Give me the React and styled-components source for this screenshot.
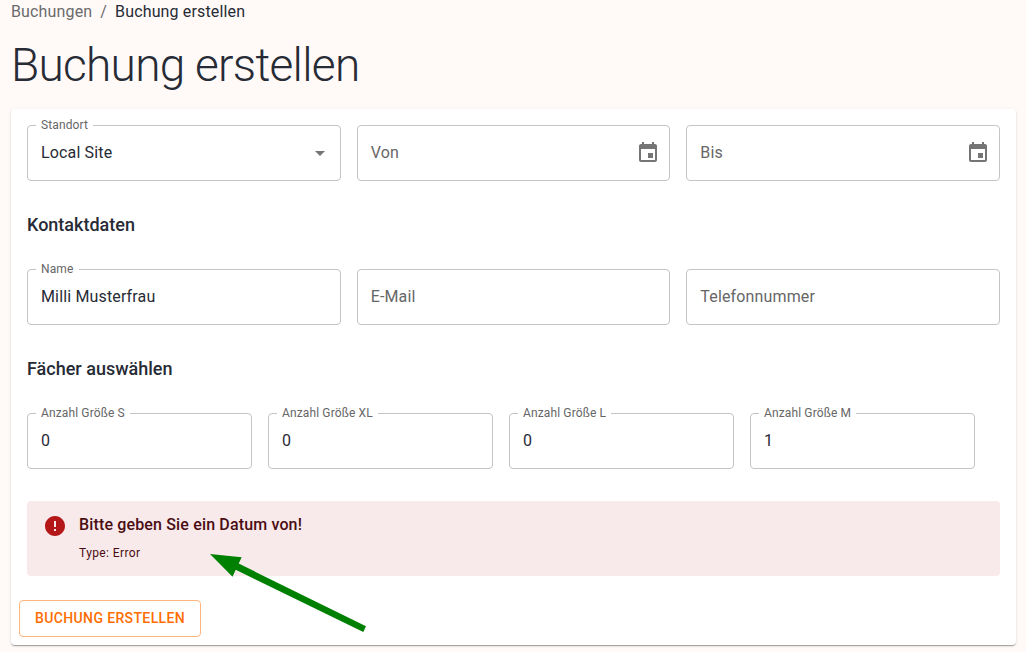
import React from "react";
import styled, { createGlobalStyle } from "styled-components";

const GlobalStyle = createGlobalStyle`
  *, *::before, *::after { box-sizing: border-box; }
  body {
    margin: 0;
    background: #fffaf8;
    color: #272b35;
    font-family: Roboto, "Liberation Sans", sans-serif;
    font-size: 16px;
    line-height: 24px;
    letter-spacing: 0.15px;
  }
`;

const Page = styled.main`
  position: relative;
  height: 652px;
  padding: 0 10px 0 11px;
  overflow: hidden;
`;

const Breadcrumbs = styled.nav`
  display: flex;
  height: 24px;
`;

const Crumb = styled.span`
  color: ${(p) => (p.$current ? "#272b35" : "#6b6a6c")};
`;

const Separator = styled.span`
  margin: 0 8px;
  color: #6b6a6c;
`;

const Title = styled.h1`
  margin: 13px 0 16px;
  font-size: 46px;
  font-weight: 300;
  line-height: 56px;
  letter-spacing: -0.01562em;
`;

const Card = styled.form`
  display: flex;
  flex-direction: column;
  height: 536px;
  padding: 16px 16px 8px;
  border-radius: 4px;
  background: #fff;
  box-shadow: 0 2px 1px -1px rgba(0, 0, 0, 0.2), 0 1px 1px 0 rgba(0, 0, 0, 0.14),
    0 1px 3px 0 rgba(0, 0, 0, 0.12);
`;

const FieldRow = styled.div`
  display: grid;
  grid-template-columns: ${(p) => p.$columns};
  gap: 16px;
`;

const SectionTitle = styled.h2`
  margin: 28px 0;
  font-size: 18px;
  font-weight: 500;
  line-height: 32px;
  letter-spacing: 0;
`;

const FieldBox = styled.div`
  position: relative;
  display: flex;
  align-items: center;
  justify-content: space-between;
  height: 56px;
  padding: 0 ${(p) => (p.$action ? "10px" : "9px")} 0 14px;
`;

const Value = styled.span`
  color: ${(p) => (p.$placeholder ? "#666" : "#272b35")};
`;

const Outline = styled.fieldset`
  position: absolute;
  inset: -5px 0 0;
  margin: 0;
  padding: 0 8px;
  border: 1px solid #c4c4c4;
  border-radius: 4px;
  min-width: 0;
  pointer-events: none;
`;

const Notch = styled.legend`
  height: 11px;
  padding: 0 5px;
  color: #666;
  font-size: 12px;
  line-height: 11px;
  letter-spacing: 0.13px;
  white-space: nowrap;
`;

const OutlineTop = styled(Outline)`
  inset: 0;
`;

const Icon = styled.svg`
  display: block;
  flex: none;
  width: 24px;
  height: 24px;
  fill: ${(p) => p.$color || "#757575"};
`;

const Alert = styled.div`
  display: flex;
  flex: none;
  height: 75px;
  margin-top: 32px;
  padding: 13px 16px;
  gap: 12px;
  border-radius: 4px;
  background: #f8e9ea;
  color: #4a0d12;
`;

const AlertTitle = styled.div`
  font-weight: 500;
  line-height: 24px;
`;

const AlertText = styled.div`
  margin-top: 6px;
  font-size: 12px;
  line-height: 20px;
  letter-spacing: 0.4px;
`;

const AlertBody = styled.div`
  margin-top: -1px;
`;

const SubmitButton = styled.button`
  flex: none;
  align-self: flex-start;
  height: 37px;
  margin: 24px 0 0 -8px;
  padding: 0 15px 2px;
  border: 1px solid #ffb57d;
  border-radius: 4px;
  background: transparent;
  color: #ff6d00;
  font: 500 14px/24px Roboto, "Liberation Sans", sans-serif;
  letter-spacing: 0.37px;
  text-transform: uppercase;
  white-space: nowrap;
`;

const Pointer = styled.svg`
  position: absolute;
  left: 205px;
  top: 548px;
  width: 168px;
  height: 90px;
  fill: #008000;
`;

const CalendarIcon = () => (
  <Icon viewBox="0 0 24 24">
    <path d="M19 3h-1V1h-2v2H8V1H6v2H5c-1.11 0-1.99.9-1.99 2L3 19c0 1.1.89 2 2 2h14c1.1 0 2-.9 2-2V5c0-1.1-.9-2-2-2zm0 16H5V8h14v11zm-7-7h5v5h-5z" />
  </Icon>
);

const DropdownIcon = () => (
  <Icon viewBox="0 0 24 24">
    <path d="M7 10l5 5 5-5z" />
  </Icon>
);

const ErrorIcon = () => (
  <Icon viewBox="0 0 24 24" $color="#b41718">
    <path d="M12 2C6.48 2 2 6.48 2 12s4.48 10 10 10 10-4.48 10-10S17.52 2 12 2zm1 15h-2v-2h2v2zm0-4h-2V7h2v6z" />
  </Icon>
);

function Field({ label, value, icon, action }) {
  const filled = value !== undefined;
  return (
    <FieldBox $action={action}>
      <Value $placeholder={!filled}>{filled ? value : label}</Value>
      {icon}
      {filled ? (
        <Outline>
          <Notch>{label}</Notch>
        </Outline>
      ) : (
        <OutlineTop />
      )}
    </FieldBox>
  );
}

export default function App() {
  return (
    <>
      <GlobalStyle />
      <Page>
        <Breadcrumbs>
          <Crumb>Buchungen</Crumb>
          <Separator>/</Separator>
          <Crumb $current>Buchung erstellen</Crumb>
        </Breadcrumbs>
        <Title>Buchung erstellen</Title>
        <Card>
          <FieldRow $columns="repeat(3, 1fr)">
            <Field label="Standort" value="Local Site" icon={<DropdownIcon />} />
            <Field label="Von" icon={<CalendarIcon />} action />
            <Field label="Bis" icon={<CalendarIcon />} action />
          </FieldRow>
          <SectionTitle>Kontaktdaten</SectionTitle>
          <FieldRow $columns="repeat(3, 1fr)">
            <Field label="Name" value="Milli Musterfrau" />
            <Field label="E-Mail" />
            <Field label="Telefonnummer" />
          </FieldRow>
          <SectionTitle>Fächer auswählen</SectionTitle>
          <FieldRow $columns="repeat(4, 225px)">
            <Field label="Anzahl Größe S" value="0" />
            <Field label="Anzahl Größe XL" value="0" />
            <Field label="Anzahl Größe L" value="0" />
            <Field label="Anzahl Größe M" value="1" />
          </FieldRow>
          <Alert>
            <ErrorIcon />
            <AlertBody>
              <AlertTitle>Bitte geben Sie ein Datum von!</AlertTitle>
              <AlertText>Type: Error</AlertText>
            </AlertBody>
          </Alert>
          <SubmitButton type="button">Buchung erstellen</SubmitButton>
        </Card>
        <Pointer viewBox="205 548 168 90">
          <path d="M210 554L241.700 557.300L238.700 563.600L366 626.300L363.300 632L235.700 569.800L232.500 576.700Z" />
        </Pointer>
      </Page>
    </>
  );
}
